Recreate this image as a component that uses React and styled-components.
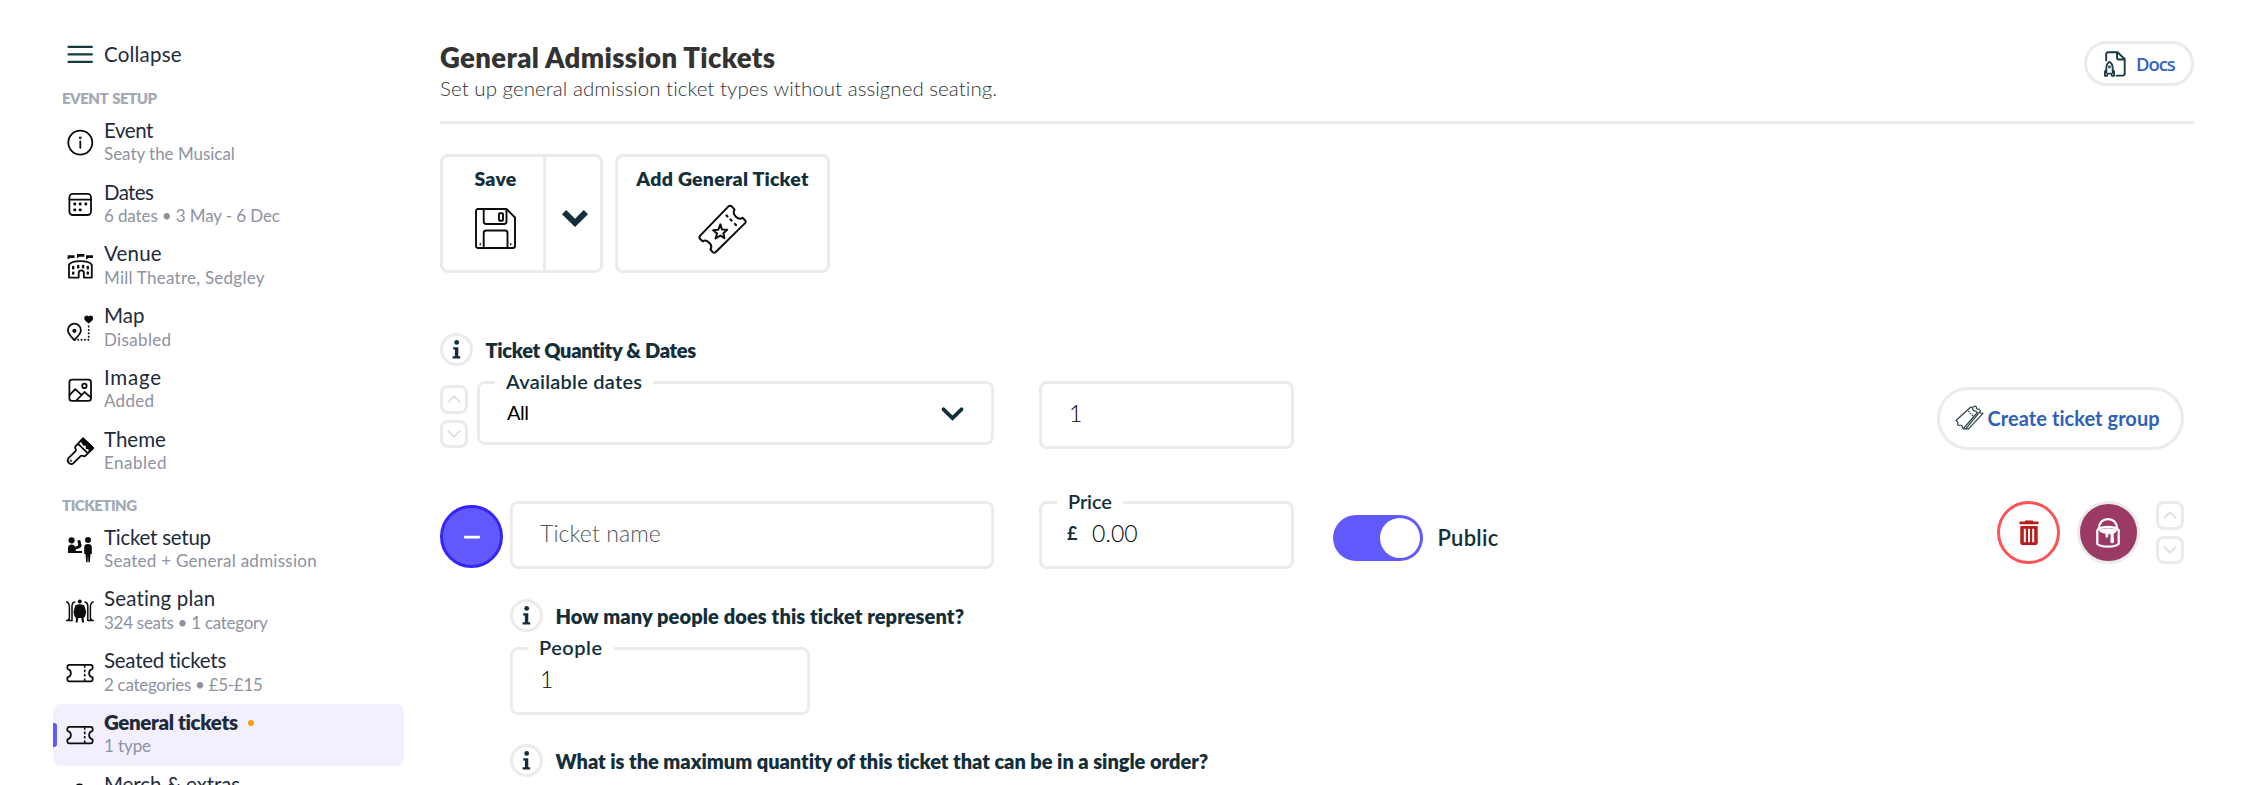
import React from 'react';
import styled, { createGlobalStyle, css } from 'styled-components';

const ink = '#132f3a';
const line = '#ebebeb';
const violet = '#6259fc';

const GlobalStyle = createGlobalStyle`
  *, *::before, *::after { box-sizing: border-box; }
  body {
    margin: 0;
    background: #fff;
    color: ${ink};
    font-family: Lato, "Liberation Sans", sans-serif;
    font-size: 20px;
    font-variant-ligatures: none;
    overflow: hidden;
  }
  button, input { font: inherit; color: inherit; letter-spacing: inherit; }
  svg { display: block; flex: none; overflow: visible; }
`;

const Shell = styled.div`
  display: flex;
  height: 785px;
  overflow: hidden;
`;

/* ---------- sidebar ---------- */

const Sidebar = styled.nav`
  flex: none;
  width: 351px;
  margin-left: 53px;
  padding-top: 23.5px;
`;

const CollapseButton = styled.button`
  display: flex;
  align-items: center;
  gap: 10px;
  width: 100%;
  height: 62.5px;
  padding: 0 0 1px 13px;
  border: 0;
  background: none;
  color: #1f2b3a;
  font-size: 20.5px;
  font-weight: 400;
  letter-spacing: 0.2px;
`;

const NavHeading = styled.h3`
  margin: ${(p) => (p.$spaced ? '10.5px' : '0')} 0 0;
  padding-left: 9px;
  height: 25.3px;
  color: #a3aab8;
  font-size: 15px;
  font-weight: 800;
  line-height: 24px;
  letter-spacing: -0.5px;
  word-spacing: 1.5px;
`;

const NavItem = styled.a`
  position: relative;
  display: flex;
  align-items: center;
  gap: 10px;
  height: 61.85px;
  padding-left: 13px;
  border-radius: 8px;
  ${(p) =>
    p.$active &&
    css`
      background: #f3f0fe;
      &::before {
        content: '';
        position: absolute;
        left: 0;
        top: 19px;
        width: 4px;
        height: 24px;
        border-radius: 0 3px 3px 0;
        background: ${violet};
      }
    `}
`;

const NavText = styled.span`
  display: flex;
  flex-direction: column;
  height: 47px;
  line-height: 23.3px;
  white-space: nowrap;
`;

const NavTitle = styled.span`
  display: flex;
  align-items: center;
  gap: 10px;
  color: #1f2b3a;
  font-size: 20.5px;
  font-weight: ${(p) => (p.$active ? 800 : 400)};
  letter-spacing: ${(p) => p.$track || 0}px;
`;

const NavSub = styled.span`
  color: #8d929f;
  font-size: 17px;
  letter-spacing: ${(p) => p.$track || 0}px;
`;

const UnsavedDot = styled.i`
  width: 6px;
  height: 6px;
  border-radius: 50%;
  background: #f59e0b;
`;

/* ---------- main ---------- */

const Main = styled.main`
  flex: none;
  width: 1754px;
  margin-left: 36px;
`;

const PageHeader = styled.header`
  display: flex;
  justify-content: space-between;
  height: 124px;
  padding-top: 41px;
  border-bottom: 3px solid ${line};
`;

const PageTitle = styled.h1`
  margin: 0;
  color: #333;
  font-size: 27.5px;
  font-weight: 800;
  line-height: 33px;
  letter-spacing: 0.35px;
`;

const PageIntro = styled.p`
  margin: 2px 0 0;
  color: #333;
  font-size: 20.5px;
  font-weight: 300;
  line-height: 24px;
  letter-spacing: 0.05px;
`;

const DocsLink = styled.a`
  display: flex;
  align-items: center;
  gap: 10px;
  width: 110px;
  height: 45px;
  padding-left: 17px;
  border: 3px solid ${line};
  border-radius: 23px;
  color: #3263bb;
  font-family: "Open Sans", "Noto Sans", sans-serif;
  font-size: 18.5px;
  font-weight: 600;
  letter-spacing: -1.1px;
`;

const Toolbar = styled.div`
  display: flex;
  gap: 12px;
  margin-top: 30px;
  height: 119px;
`;

const ToolGroup = styled.div`
  display: flex;
  border: 3px solid ${line};
  border-radius: 8px;
`;

const ToolButton = styled.button`
  display: flex;
  flex-direction: column;
  align-items: center;
  gap: ${(p) => p.$gap}px;
  width: ${(p) => p.$width}px;
  padding: 10px 0 0 ${(p) => p.$shift || 0}px;
  border: 0;
  background: none;
  font-size: 19.5px;
  font-weight: 800;
  line-height: 23px;
  letter-spacing: 0.25px;
  white-space: nowrap;
`;

const ToolMenuButton = styled.button`
  display: flex;
  align-items: center;
  justify-content: center;
  width: 57px;
  padding: 9px 0 0 4px;
  border: 0;
  border-left: 3px solid ${line};
  background: none;
`;

const HelpRow = styled.div`
  display: flex;
  align-items: center;
  gap: 12.5px;
  height: 33px;
  margin-top: ${(p) => p.$top}px;
  font-weight: 800;
  white-space: nowrap;
  letter-spacing: ${(p) => p.$track}px;
`;

const HelpBadge = styled.span`
  display: grid;
  place-items: center;
  width: 33px;
  height: 33px;
  border: 3px solid ${line};
  border-radius: 50%;
`;

const GroupRow = styled.div`
  display: flex;
  align-items: flex-start;
  height: 70px;
  margin-top: 15px;
  padding-right: 10px;
`;

const TicketRow = styled.div`
  display: flex;
  align-items: flex-start;
  height: 68px;
  margin-top: 50px;
  padding-right: 10px;
`;

const SortButtons = styled.div`
  display: flex;
  flex-direction: column;
  gap: 6px;
  margin: ${(p) => p.$margin};
`;

const SortButton = styled.button`
  display: grid;
  place-items: center;
  width: 28px;
  height: 28.5px;
  padding: 0;
  border: 3px solid ${line};
  border-radius: 8px;
  background: #fff;
`;

const Field = styled.label`
  position: relative;
  display: flex;
  align-items: center;
  gap: 14px;
  width: ${(p) => p.$width}px;
  height: ${(p) => p.$height || 67.5}px;
  margin-right: ${(p) => p.$after || 0}px;
  padding: 0 27.5px 3px ${(p) => p.$inset || 27}px;
  border: 3px solid ${line};
  border-radius: 8px;
`;

const FieldLabel = styled.span`
  position: absolute;
  left: 15px;
  top: -15px;
  padding: 0 11px 0 ${(p) => p.$inset || 11}px;
  background: #fff;
  font-weight: 600;
  line-height: 24px;
  letter-spacing: ${(p) => p.$track || 0}px;
`;

const FieldInput = styled.input`
  flex: 1;
  min-width: 0;
  padding: 0;
  border: 0;
  outline: 0;
  background: none;
  color: #000;
  font-size: 23px;
  font-weight: 300;
  letter-spacing: 0.1px;
  &::placeholder { color: #555; opacity: 1; }
`;

const SelectValue = styled.span`
  flex: 1;
  color: #000;
  font-size: 20px;
  font-weight: 400;
  letter-spacing: -0.5px;
`;

const SelectArrow = styled.span`
  padding-top: 5px;
`;

const Currency = styled.span`
  font-size: 18px;
  font-weight: 700;
  width: 11px;
`;

const GroupButton = styled.button`
  display: flex;
  align-items: center;
  gap: 4px;
  width: 247.5px;
  height: 63px;
  margin: 6px 0 0 auto;
  padding: 0 0 1px 15px;
  border: 3px solid ${line};
  border-radius: 32px;
  background: #fff;
  color: #2f60b7;
  font-weight: 700;
  letter-spacing: 0.06px;
  white-space: nowrap;
`;

const RoundButton = styled.button`
  display: grid;
  place-items: center;
  width: 63px;
  height: 63px;
  margin: ${(p) => p.$margin};
  padding: 0;
  border: 3px solid ${(p) => p.$ring};
  border-radius: 50%;
  background: ${(p) => p.$fill};
`;

const Switch = styled.button`
  display: flex;
  justify-content: flex-end;
  width: 90px;
  height: 46px;
  margin: 14px 15px 0 0.5px;
  padding: 3px;
  border: 0;
  border-radius: 23px;
  background: ${violet};
`;

const SwitchKnob = styled.span`
  width: 40px;
  height: 40px;
  border-radius: 50%;
  background: #fff;
`;

const SwitchLabel = styled.span`
  margin-top: 23.5px;
  font-size: 22px;
  font-weight: 600;
  line-height: 26px;
  letter-spacing: 0.25px;
`;

const Details = styled.section`
  padding-left: 70px;
`;

const PeopleField = styled.div`
  display: flex;
  margin-top: 15px;
`;

/* ---------- icons ---------- */

const NavIcon = ({ children }) => (
  <svg width="28" height="28" viewBox="0 0 28 28" fill="none" stroke="#0c0c0c" strokeWidth="1.8" strokeLinecap="round" strokeLinejoin="round">
    {children}
  </svg>
);

const MenuIcon = () => (
  <svg width="28" height="28" viewBox="0 0 28 28" stroke="#173a44" strokeWidth="2.1" strokeLinecap="round">
    <path d="M2.5 6.9h23.4M2.5 14.4h23.4M2.5 21.900h23.4" />
  </svg>
);

const InfoIcon = () => (
  <NavIcon>
    <circle cx="14.3" cy="14.6" r="12" />
    <path d="M14.3 13.4v6.4" />
    <circle cx="14.3" cy="9.8" r="0.5" />
  </NavIcon>
);

const CalendarIcon = () => (
  <NavIcon>
    <rect x="3.4" y="3.8" width="21.6" height="21.2" rx="3.4" />
    <path d="M3.4 9.6h21.6" />
    <g fill="#0c0c0c" stroke="none">
      <rect x="7.4" y="12.6" width="2.8" height="2.8" rx=".8" />
      <rect x="12.8" y="12.6" width="2.8" height="2.8" rx=".8" />
      <rect x="18.4" y="12.6" width="2.8" height="2.8" rx=".8" />
      <rect x="7.4" y="18.4" width="2.8" height="2.8" rx=".8" />
      <rect x="12.8" y="18.4" width="2.8" height="2.8" rx=".8" />
    </g>
  </NavIcon>
);

const VenueIcon = () => (
  <NavIcon>
    <path d="M3 25.6V12.8C6 7.8 22.6 7.8 25.8 12.8V25.6H17.9V20.900a2.6 2.6 0 0 0-5.2 0V25.6Z" />
    <g fill="#0c0c0c" stroke="none">
      <path d="M1.6 3.200h7v2.700h-4.500l-2.500 1.600zM11 2h7.400v2.700h-5l-2.400 1.600zM20 3.200h7v2.700h-4.500l-2.500 1.600z" />
      <rect x="6" y="13.800" width="2.400" height="3.600" rx="1" />
      <rect x="11" y="12.800" width="2.400" height="3.600" rx="1" />
      <rect x="15.900" y="12.800" width="2.400" height="3.600" rx="1" />
      <rect x="20.600" y="13.800" width="2.400" height="3.600" rx="1" />
      <rect x="6" y="19.400" width="2.400" height="3.400" rx="1" />
      <rect x="20.600" y="19.400" width="2.400" height="3.400" rx="1" />
    </g>
  </NavIcon>
);

const MapIcon = () => (
  <NavIcon>
    <path d="M8.300 26C5 22.600 1.900 19.700 1.900 16.200a6.500 6.500 0 0 1 13 0C14.900 19.700 11.600 22.600 8.300 26Z" />
    <circle cx="8.400" cy="16.800" r="2.100" fill="#0c0c0c" stroke="none" />
    <path d="M22.700 9.500C19.800 7.300 18.200 5.900 18.200 3.900a2.500 2.500 0 0 1 4.500-1.300 2.500 2.500 0 0 1 4.500 1.300c0 2-1.600 3.400-4.500 5.600Z" fill="#0c0c0c" stroke="none" />
    <path d="M22.700 12.500V25.800H8.500" strokeWidth="1.900" strokeDasharray=".1 3.300" />
  </NavIcon>
);

const ImageIcon = () => (
  <NavIcon>
    <rect x="3.400" y="3.600" width="21.600" height="21.200" rx="2.600" />
    <circle cx="18.400" cy="9.900" r="2.200" />
    <path d="M3.600 19.200 9.200 13.200l5.500 5M10.500 24.400l8-8.400 6.500 5.600" />
  </NavIcon>
);

const BrushIcon = () => (
  <NavIcon>
    <path d="M9.500 9.400 17 1.400 27 11 19.600 18.600C17.600 20.600 16.400 17.400 14.600 19.200L7.200 26.400C5 28.400.1 25.400 2.200 21.400L9.600 14.200C11.400 12.400 7.600 11.400 9.500 9.400ZM12.100 6.800 22 16.300" />
    <path d="M15.200 3.600 17 1.400 27.100 11 23.600 14.600 23 10.800 20.800 11.400 20.400 7.400 17.800 7.800z" fill="#0c0c0c" />
    <circle cx="4.800" cy="23.800" r=".3" />
  </NavIcon>
);

const CounterIcon = () => (
  <NavIcon>
    <g fill="#0c0c0c" stroke="none">
      <circle cx="5.600" cy="5.300" r="3.100" />
      <circle cx="22" cy="5.100" r="3" />
      <path d="M2 13.200Q2 9.400 5.600 9.400 8 9.400 9.200 11.800L12.300 10.400 11.400 5.400 14.200 5 15.600 10.400Q15.800 12.200 13.600 13L9.700 14.500V16H16v2H2.300Q1.800 18 2 16Z" />
      <path d="M18.200 12Q18.200 9 22 9t3.800 3v7h-1.300l-.7 8.200h-1.400L22 20l-.4 7.200h-1.400L19.500 19h-1.300z" />
    </g>
  </NavIcon>
);

const SeatingIcon = () => (
  <NavIcon>
    <g fill="#0c0c0c" stroke="none">
      <circle cx="13.800" cy="4.600" r="2" />
      <path d="M9.200 8.600Q13.800 6 18.400 8.600L20.200 15Q19.400 20 17.600 21L18 25.400H16L15.400 21H12.200L11.600 25.400H9.600L10 21Q8.200 20 7.500 15Z" />
    </g>
    <path d="M.6 5Q3.200 5.500 3.400 10V20.500Q3.400 23.500.6 23.500H6V9Q6.200 5.300 8.800 5M27.200 5Q24.600 5.500 24.400 10V20.500Q24.400 23.500 27.200 23.500H21.800V9Q21.600 5.300 19 5" strokeWidth="1.500" />
  </NavIcon>
);

const TicketIcon = () => (
  <NavIcon>
    <path d="M3.200 5.800H24.800a1.800 1.800 0 0 1 1.800 1.800v2.200a4.400 4.400 0 0 0 0 8.600v2.200a1.800 1.800 0 0 1-1.800 1.800H3.200a1.800 1.800 0 0 1-1.800-1.800v-2.200a4.400 4.400 0 0 0 0-8.600V7.600A1.800 1.800 0 0 1 3.200 5.800Z" />
    <path d="M18.700 6.200v16.400" strokeDasharray="2.600 1.800" strokeLinecap="butt" strokeWidth="1.600" />
  </NavIcon>
);

const MerchIcon = () => (
  <NavIcon>
    <path d="M9.500 10V6.500a4 4 0 0 1 8 0V10" strokeWidth="2.200" />
    <path d="M4 10h19v16H4z" />
  </NavIcon>
);

const DocsIcon = () => (
  <svg width="22" height="26" viewBox="0 0 22 26" fill="none" stroke="#173a44" strokeWidth="1.900" strokeLinejoin="round" strokeLinecap="round">
    <path d="M2.200 9.500V3.200a2 2 0 0 1 2-2H13.500L20.700 8v14.600a2 2 0 0 1-2 2H12.500M13 1.400V6.500a2 2 0 0 0 2 2H20.500" />
    <path d="M2.400 22V16Q2.600 12.600 5.500 10.800 8.400 12.600 8.600 16V22M2.300 18.500.9 20.500V24.800H3L4 22.500H7L8 24.800H10.100V20.500L8.700 18.500" strokeWidth="1.700" />
    <circle cx="5.500" cy="16" r=".5" />
  </svg>
);

const FloppyIcon = () => (
  <svg width="41" height="41" viewBox="0 0 41 41" fill="none" stroke="#0c0c0c" strokeWidth="1.900" strokeLinejoin="round">
    <path d="M3 1H31.500L40 9.500V38a2 2 0 0 1-2 2H3a2 2 0 0 1-2-2V3a2 2 0 0 1 2-2Z" />
    <path d="M8.700 1V13.500a2.500 2.500 0 0 0 2.500 2.500H29a2.500 2.500 0 0 0 2.500-2.500V1M8.700 40V25a2.500 2.500 0 0 1 2.500-2.500H30a2.500 2.500 0 0 1 2.500 2.500V40" />
    <rect x="24" y="5.300" width="4" height="7.500" rx=".8" />
    <path d="M4.600 36.200h1.400M35 36.200h1.400" />
  </svg>
);

const StarTicketIcon = () => (
  <svg width="49" height="49" viewBox="0 0 49 49" fill="none" stroke="#0c0c0c" strokeWidth="2" strokeLinejoin="round" strokeLinecap="round">
    <path d="M30.200 1.600 2.200 30.600Q.6 32.400 2.200 34L4.600 36.400C8 33.400 15.600 39.600 12.400 44.400L14.600 47Q16.200 48.600 17.800 47L46.800 18.400Q48.600 16.800 47 15.200L44.600 12.800C40.600 16 33.400 9.800 36.600 4.600L34 1.600Q32 0 30.200 1.600Z" />
    <path d="m22.400 19.400 1.600 5.200 5.200.2-3.800 3.400 1 5-4-2.700-4.800 3 1.500-5-4-3.300 5.100-.4Z" />
    <path d="M28.500 10.500l1 1M32.500 14.500l1 1M37 19l1 1" strokeWidth="2.200" />
  </svg>
);

const BoldChevron = () => (
  <svg width="26" height="17" viewBox="0 0 26 17" fill={ink}>
    <path d="M4.200 0 13 8.700 21.800 0 26 4.300 13 17 0 4.300Z" />
  </svg>
);

const SelectChevron = () => (
  <svg width="23" height="14" viewBox="0 0 23 14" fill="none" stroke={ink} strokeWidth="3.800" strokeLinecap="round">
    <path d="M2.500 2.300 11.500 11 20.500 2.300" />
  </svg>
);

const SortChevron = ({ up }) => (
  <svg width="14" height="8" viewBox="0 0 14 8" fill="none" stroke="#dcdcdc" strokeWidth="1.700" strokeLinecap="round">
    <path d={up ? 'M1.200 7 7 1.200 12.800 7' : 'M1.200 1 7 6.800 12.800 1'} />
  </svg>
);

const HelpIcon = () => (
  <svg width="9" height="19" viewBox="0 0 9 19" fill={ink}>
    <circle cx="4.700" cy="2.400" r="2.400" />
    <path d="M1.200 7.200H6.300V16.200H8.200V18.600H.6V16.200H2.900V9.500H1.200Z" />
  </svg>
);

const TicketsIcon = () => (
  <svg width="29" height="26" viewBox="0 0 29 26" fill="none" stroke="#2f444c" strokeWidth="1.200" strokeLinejoin="round" strokeLinecap="round">
    <path d="M1 15.500 15.800 2 17.800 3.300Q17.600 6 20.400 6L22.400 7.500 8.500 23.500 7.500 22.800Q7.300 19.800 5 20.300L2.500 20Q4 17.500 1 15.500Z" />
    <path d="M18 2.200 19.500 1 21.400 1.800Q20.900 4.600 24 4.200L25.600 5.800 10.800 23.900 8.500 23.800M24.500 7Q25 8.300 28 8.400L13.500 23.800 11 23.700" />
    <path d="m13.500 6.200 4.500 4.600" strokeDasharray=".8 1.800" />
  </svg>
);

const TrashIcon = () => (
  <svg width="20" height="25" viewBox="0 0 20 25" fill="#b81c1c">
    <path d="M6 .5h8v1h5.500v2.800H.5V1.500H6zM1.300 6h17.400v17a2 2 0 0 1-2 2H3.300a2 2 0 0 1-2-2zM4.800 8.800v13.400h2V8.800zm4.200 0v13.400h2V8.800zm4.200 0v13.400h2V8.800z" fillRule="evenodd" />
  </svg>
);

const BucketIcon = () => (
  <svg width="24" height="30" viewBox="0 0 24 30" fill="none" stroke="#fff" strokeWidth="2.200" strokeLinecap="round" strokeLinejoin="round">
    <path d="M1.300 12V26Q4.500 28.600 12 28.600T22.700 26V12Q19 8.800 12 8.800T1.300 12ZM2.800 10.300Q4 1.200 12 1.200T21.200 10.300" />
    <path d="M3 12Q12 8.500 21 12 20.500 15 18.200 15.200 17.400 15.600 17.600 18L18.200 23.500Q17 26.500 14.600 24.600 13.800 23.400 14.600 21.500L14.600 16.800 12.800 15.600 11.600 19.500Q10.200 20.400 9.600 18.500L9.400 15.600Q4 15.400 3 12Z" fill="#fff" stroke="none" />
  </svg>
);

const MinusIcon = () => (
  <svg width="16" height="4" viewBox="0 0 16 4" fill="#fff">
    <rect y=".7" width="16" height="2.800" rx="1" />
  </svg>
);

/* ---------- data ---------- */

const eventSetup = [
  { title: 'Event', tt: -0.45, sub: 'Seaty the Musical', st: -0.03, icon: <InfoIcon /> },
  { title: 'Dates', tt: -0.65, sub: '6 dates • 3 May - 6 Dec', st: -0.12, icon: <CalendarIcon /> },
  { title: 'Venue', tt: 0.2, sub: 'Mill Theatre, Sedgley', st: 0.25, icon: <VenueIcon /> },
  { title: 'Map', tt: 0.1, sub: 'Disabled', st: 0.35, icon: <MapIcon /> },
  { title: 'Image', tt: 0.75, sub: 'Added', st: 0.3, icon: <ImageIcon /> },
  { title: 'Theme', tt: 0, sub: 'Enabled', st: 0.5, icon: <BrushIcon /> },
];

const ticketing = [
  { title: 'Ticket setup', tt: -0.25, sub: 'Seated + General admission', st: 0.26, icon: <CounterIcon /> },
  { title: 'Seating plan', tt: 0.15, sub: '324 seats • 1 category', st: -0.28, icon: <SeatingIcon /> },
  { title: 'Seated tickets', tt: -0.26, sub: '2 categories • £5-£15', st: -0.3, icon: <TicketIcon /> },
  { title: 'General tickets', tt: -0.36, sub: '1 type', st: -0.1, icon: <TicketIcon />, active: true },
  { title: 'Merch & extras', tt: -0.1, icon: <MerchIcon /> },
];

const NavList = ({ items }) =>
  items.map((item) => (
    <NavItem key={item.title} $active={item.active}>
      {item.icon}
      <NavText>
        <NavTitle $active={item.active} $track={item.tt}>
          {item.title}
          {item.active && <UnsavedDot />}
        </NavTitle>
        {item.sub && <NavSub $track={item.st}>{item.sub}</NavSub>}
      </NavText>
    </NavItem>
  ));

const Sorter = ({ margin }) => (
  <SortButtons $margin={margin}>
    <SortButton aria-label="Move up"><SortChevron up /></SortButton>
    <SortButton aria-label="Move down"><SortChevron /></SortButton>
  </SortButtons>
);

const Help = ({ top, track, children }) => (
  <HelpRow $top={top} $track={track}>
    <HelpBadge><HelpIcon /></HelpBadge>
    {children}
  </HelpRow>
);

export default function App() {
  return (
    <>
      <GlobalStyle />
      <Shell>
        <Sidebar>
          <CollapseButton><MenuIcon />Collapse</CollapseButton>
          <NavHeading>EVENT SETUP</NavHeading>
          <NavList items={eventSetup} />
          <NavHeading $spaced>TICKETING</NavHeading>
          <NavList items={ticketing} />
        </Sidebar>
        <Main>
          <PageHeader>
            <div>
              <PageTitle>General Admission Tickets</PageTitle>
              <PageIntro>Set up general admission ticket types without assigned seating.</PageIntro>
            </div>
            <DocsLink><DocsIcon />Docs</DocsLink>
          </PageHeader>

          <Toolbar>
            <ToolGroup>
              <ToolButton $width={100} $gap={18} $shift={5}>Save<FloppyIcon /></ToolButton>
              <ToolMenuButton aria-label="Save options"><BoldChevron /></ToolMenuButton>
            </ToolGroup>
            <ToolGroup>
              <ToolButton $width={209} $gap={15}>Add General Ticket<StarTicketIcon /></ToolButton>
            </ToolGroup>
          </Toolbar>

          <Help top={60} track={-0.3}>Ticket Quantity &amp; Dates</Help>

          <GroupRow>
            <Sorter margin="4px 9px 0 0" />
            <Field as="div" $width={517} $height={64} $after={45}>
              <FieldLabel $track={0.25}>Available dates</FieldLabel>
              <SelectValue>All</SelectValue>
              <SelectArrow><SelectChevron /></SelectArrow>
            </Field>
            <Field $width={255}>
              <FieldInput defaultValue="1" />
            </Field>
            <GroupButton><TicketsIcon />Create ticket group</GroupButton>
          </GroupRow>

          <TicketRow>
            <RoundButton $margin="4px 7px 0 0" $ring="#3424f7" $fill={violet} aria-label="Collapse ticket"><MinusIcon /></RoundButton>
            <Field $width={484} $after={45}>
              <FieldInput placeholder="Ticket name" />
            </Field>
            <Field $width={255} $after={38} $inset={25}>
              <FieldLabel $track={-0.15}>Price</FieldLabel>
              <Currency>£</Currency>
              <FieldInput defaultValue="0.00" />
            </Field>
            <Switch aria-label="Public"><SwitchKnob /></Switch>
            <SwitchLabel>Public</SwitchLabel>
            <RoundButton $margin="0 16.5px 0 auto" $ring="#fb5456" $fill="#fff" aria-label="Delete ticket"><TrashIcon /></RoundButton>
            <RoundButton $margin="0 16.5px 0 0" $ring={line} $fill="#9c3a66" aria-label="Ticket colour"><BucketIcon /></RoundButton>
            <Sorter margin="0" />
          </TicketRow>

          <Details>
            <Help top={30} track={0.1}>How many people does this ticket represent?</Help>
            <PeopleField>
              <Field $width={300}>
                <FieldLabel $track={0.5}>People</FieldLabel>
                <FieldInput defaultValue="1" />
              </Field>
            </PeopleField>
            <Help top={29.5} track={-0.04}>What is the maximum quantity of this ticket that can be in a single order?</Help>
          </Details>
        </Main>
      </Shell>
    </>
  );
}
